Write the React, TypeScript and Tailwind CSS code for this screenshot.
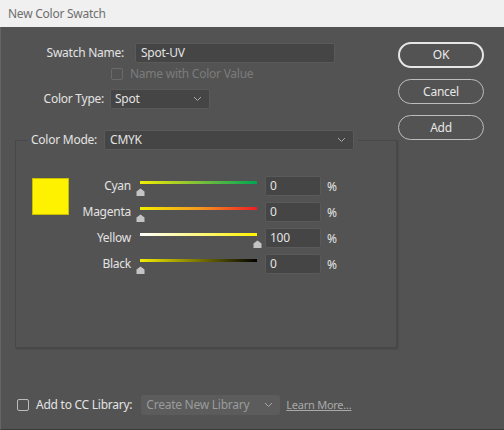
import React from "react";

const font = { fontFamily: '"Noto Sans", "Open Sans", sans-serif' };

function Chevron({ className = "" }: { className?: string }) {
  return (
    <svg width="9" height="6" viewBox="0 0 9 6" className={className}>
      <path d="M1 1 L4.5 4.5 L8 1" fill="none" stroke="#a8a8a8" strokeWidth="1" />
    </svg>
  );
}

function Thumb() {
  return (
    <svg width="9" height="8" viewBox="0 0 9 8">
      <path d="M4.5 0.5 L8.5 3.5 L8.5 8 L0.5 8 L0.5 3.5 Z" fill="#c4c4c4" />
    </svg>
  );
}

const rows = [
  { name: "Cyan", value: "0", pct: 0, grad: "bg-[linear-gradient(to_right,#f2ee00,#7fbf3a_50%,#00a651)]" },
  { name: "Magenta", value: "0", pct: 0, grad: "bg-[linear-gradient(to_right,#f2ee00,#f59a1e_50%,#ed1c24)]" },
  { name: "Yellow", value: "100", pct: 100, grad: "bg-[linear-gradient(to_right,#ffffff,#fff200)]" },
  { name: "Black", value: "0", pct: 0, grad: "bg-[linear-gradient(to_right,#f2ee00,#7a7400_50%,#000000)]" },
];

export default function App() {
  return (
    <div className="w-[504px] h-[430px] bg-[#535353] flex flex-col overflow-hidden text-[12px] tracking-[-0.25px] text-[#e3e3e3]" style={font}>
      <div className="h-[27px] bg-[#f0f0f0] text-[#6e6e6e] flex items-center pl-[8px] text-[12px] shrink-0">
        New Color Swatch
      </div>
      <div className="flex-1 flex flex-col border-l border-[#656565] border-b border-b-[#3a3a3a]">
        <div className="flex">
          {/* left column */}
          <div className="w-[396px] flex flex-col">
            <div className="flex items-center mt-[16px] h-[20px]">
              <span className="w-[123px] text-right pr-[0px]">Swatch Name:</span>
              <div className="ml-[11px] w-[200px] h-[20px] bg-[#454545] border border-[#5a5a5a] rounded-[2px] flex items-center pl-[5px]">
                Spot-UV
              </div>
            </div>
            <div className="flex items-center mt-[5px] h-[12px]">
              <div className="ml-[110px] w-[12px] h-[12px] border border-[#6a6a6a] rounded-[2px]" />
              <span className="ml-[7px] text-[#7c7c7c]">Name with Color Value</span>
            </div>
            <div className="flex items-center mt-[9px] h-[20px]">
              <span className="w-[103px] text-right">Color Type:</span>
              <div className="ml-[6px] w-[100px] h-[20px] bg-[#454545] border border-[#5a5a5a] rounded-[2px] flex items-center justify-between pl-[4px] pr-[7px]">
                <span>Spot</span>
                <Chevron />
              </div>
            </div>
            <fieldset className="ml-[14px] mt-[21px] w-[382px] h-[218px] border border-[#484848] shadow-[1px_1px_2px_rgba(0,0,0,0.18)] p-0 m-0 min-w-0">
              <legend className="ml-[11px] pl-[4px] pr-[4px] flex items-center h-[20px]">
                <span>Color Mode:</span>
                <div className="ml-[7px] w-[250px] h-[20px] bg-[#454545] border border-[#5a5a5a] rounded-[2px] flex items-center justify-between pl-[5px] pr-[7px]">
                  <span>CMYK</span>
                  <Chevron />
                </div>
              </legend>
              <div className="flex mt-[26px]">
                <div className="ml-[16px] w-[37px] h-[37px] bg-[#fff200] border border-[#c9bd00] mt-[2px] shrink-0" />
                <div className="flex flex-col ml-[0px]">
                  {rows.map((r) => (
                    <div key={r.name} className="flex items-center h-[20px] mb-[6px]">
                      <span className="w-[62px] text-right">{r.name}</span>
                      <div className="relative ml-[9px] w-[117px] h-[20px]">
                        <div className={`absolute left-0 right-0 top-[5px] h-[3px] ${r.grad}`} />
                        <div className="absolute top-[12px]" style={{ left: `${(r.pct / 100) * 117 - 4}px` }}>
                          <Thumb />
                        </div>
                      </div>
                      <div className="ml-[8px] w-[56px] h-[20px] bg-[#454545] border border-[#5a5a5a] rounded-[2px] flex items-center pl-[4px]">
                        {r.value}
                      </div>
                      <span className="ml-[6px] mt-[2px]">%</span>
                    </div>
                  ))}
                </div>
              </div>
            </fieldset>
          </div>
          {/* right column buttons */}
          <div className="flex flex-col ml-[1px] mt-[15px] gap-[10px]">
            <button className="w-[86px] h-[26px] rounded-full border-2 border-[#e6e6e6] text-[#ececec] flex items-center justify-center">
              OK
            </button>
            <button className="w-[86px] h-[25px] mt-[1px] rounded-full border border-[#bdbdbd] text-[#e6e6e6] flex items-center justify-center">
              Cancel
            </button>
            <button className="w-[86px] h-[25px] mt-[1px] rounded-full border border-[#bdbdbd] text-[#e6e6e6] flex items-center justify-center">
              Add
            </button>
          </div>
        </div>
        <div className="flex-1" />
        <div className="flex items-center h-[20px] mb-[14px]">
          <div className="ml-[16px] w-[12px] h-[12px] border border-[#bcbcbc] rounded-[2px]" />
          <span className="ml-[7px]">Add to CC Library:</span>
          <div className="ml-[9px] w-[139px] h-[20px] bg-[#5c5c5c] rounded-[2px] flex items-center justify-between pl-[5px] pr-[7px] text-[#9b9b9b]">
            <span>Create New Library</span>
            <Chevron />
          </div>
          <span className="ml-[6px] text-[11px] text-[#a9a9a9] underline">Learn More...</span>
        </div>
      </div>
    </div>
  );
}
